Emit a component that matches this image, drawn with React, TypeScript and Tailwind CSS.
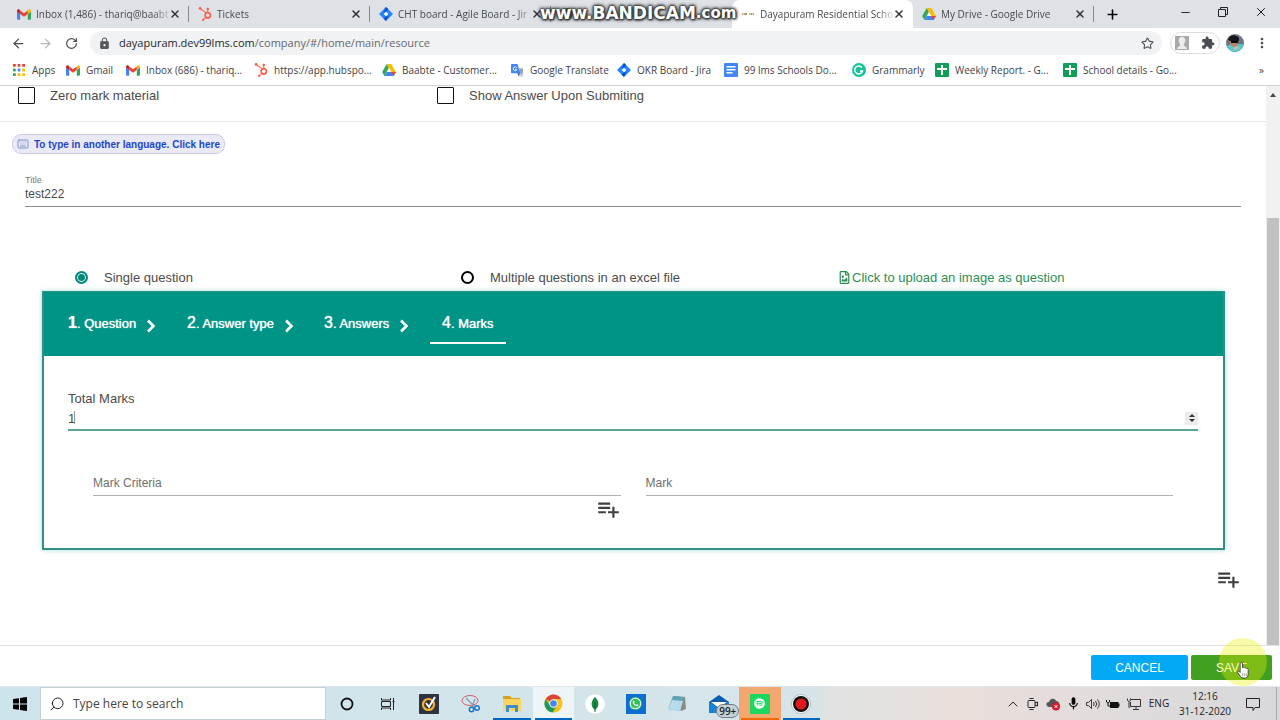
import React from "react";
import { useState } from "react";
import { ArrowLeft, ArrowRight, RotateCw, Star, X, Plus, Minus, Keyboard, Search, ChevronUp } from "lucide-react";
import { MdPlaylistAdd, MdLock, MdExtension, MdMoreVert, MdMic } from "react-icons/md";
import { FaRegFileImage, FaWhatsapp, FaSpotify, FaHubspot } from "react-icons/fa";

const Gmail = () => (
  <svg viewBox="0 0 24 18" className="w-[14px] h-[11px]">
    <path d="M0 3v13.4C0 17.3.7 18 1.6 18h3.9V7.5L0 3z" fill="#4285f4" />
    <path d="M18.500 18h3.900c.9 0 1.600-.7 1.600-1.600V3l-5.500 4.500V18z" fill="#34a853" />
    <path d="M18.500 2v6.200L24 4V2.500C24 .4 21.600-.8 20 .5L18.500 2z" fill="#fbbc04" />
    <path d="M5.500 8.200V2L12 6.900 18.500 2v6.200L12 13 5.500 8.200z" fill="#ea4335" />
    <path d="M0 2.500V4l5.500 4.200V2L4 .5C2.400-.8 0 .4 0 2.500z" fill="#c5221f" />
  </svg>
);

const Drive = () => (
  <svg viewBox="0 0 24 21" className="w-[14px] h-[12px]">
    <path d="M8 0 0 14l4 7 8-14L8 0z" fill="#34a853" />
    <path d="M8 0h8l8 14h-8L8 0z" fill="#fbbc04" />
    <path d="M8 14h16l-4 7H4l4-7z" fill="#4285f4" />
    <path d="m16 14 8 0-4 7-4-7z" fill="#ea4335" />
    <path d="m12 7 4 7H8l4-7z" fill="#fff" />
  </svg>
);

const Jira = () => (
  <svg viewBox="0 0 24 24" className="w-[14px] h-[14px]">
    <path d="M12 0 24 12 12 24 0 12z" fill="#2684ff" />
    <path d="m12 0-4 8 4 0 4-4zM12 24l4-8h-4l-4 4z" fill="#0052cc" />
    <path d="m12 8 4 4-4 4-4-4z" fill="#fff" />
  </svg>
);

const HubSpot = () => <FaHubspot className="w-[14px] h-[14px] text-[#ff5c45]" />;

const Sheets = () => (
  <svg viewBox="0 0 14 14" className="w-[14px] h-[14px]">
    <rect width="14" height="14" rx="1" fill="#0f9d58" />
    <path d="M6 2h2v3h4v2H8v5H6V7H2V5h4z" fill="#fff" />
  </svg>
);

const Docs = () => (
  <svg viewBox="0 0 14 14" className="w-[14px] h-[14px]">
    <rect width="14" height="14" rx="1" fill="#4285f4" />
    <path d="M2.500 3h9v1.500h-9zM2.500 6h9v1.500h-9zM2.500 9h6v1.500h-6z" fill="#fff" />
  </svg>
);

const Translate = () => (
  <svg viewBox="0 0 14 14" className="w-[13px] h-[13px]">
    <path d="M5 4h8v9.500H8z" fill="#c9cdd3" />
    <path d="M1 0h6l3 10H1a1 1 0 0 1-1-1V1a1 1 0 0 1 1-1z" fill="#4285f4" />
    <path d="M6.200 4.200A2 2 0 1 0 6.300 6H4.500" stroke="#fff" fill="none" />
    <path d="M9 6.500h4M11 5.500v1M12.300 6.500c-.5 2-1.500 3-2.500 3.700M10 7.500l2.500 3" stroke="#6b7a99" strokeWidth=".8" fill="none" />
    <path d="M7 10h3l-2 3z" fill="#3367d6" />
  </svg>
);

const Grammarly = () => (
  <svg viewBox="0 0 14 14" className="w-[14px] h-[14px]">
    <circle cx="7" cy="7" r="7" fill="#15c39a" />
    <path d="M10 4.700A4 4 0 1 0 10.500 8H8" stroke="#fff" strokeWidth="1.500" fill="none" />
  </svg>
);

const AppsGrid = () => (
  <svg viewBox="0 0 13 13" className="w-[12px] h-[12px]">
    <path d="M0 0h3v3H0zM5 0h3v3H5zM10 0h3v3h-3z" fill="#ea4335" />
    <path d="M0 5h3v3H0z" fill="#34a853" />
    <path d="M5 5h3v3H5z" fill="#4285f4" />
    <path d="M10 5h3v3h-3zM5 10h3v3H5zM10 10h3v3h-3z" fill="#fbbc04" />
    <path d="M0 10h3v3H0z" fill="#34a853" />
  </svg>
);

const SchoolMark = () => (
  <svg viewBox="0 0 14 14" className="w-[14px] h-[14px]">
    <path d="M1 7h5M8 7h5" stroke="#d9a066" strokeWidth="2" strokeDasharray="1.500 .5" />
    <path d="M4 7h2M10 7h1" stroke="#7fa08a" strokeWidth="2" />
  </svg>
);

const tabs = [
  { title: "Inbox (1,486) - thariq@baabt", icon: <Gmail /> },
  { title: "Tickets", icon: <HubSpot /> },
  { title: "CHT board - Agile Board - Jir", icon: <Jira /> },
  { title: "", icon: <span className="w-3 h-3 rounded-full bg-[#188038]" /> },
  { title: "Dayapuram Residential Scho", icon: <SchoolMark />, active: true },
  { title: "My Drive - Google Drive", icon: <Drive /> },
];

const bookmarks = [
  { title: "Apps", icon: <AppsGrid />, width: "w-[54px]" },
  { title: "Gmail", icon: <Gmail />, width: "w-[60px]" },
  { title: "Inbox (686) - thariq...", icon: <Gmail />, width: "w-32" },
  { title: "https://app.hubspo...", icon: <HubSpot />, width: "w-32" },
  { title: "Baabte - Customer...", icon: <Drive />, width: "w-32" },
  { title: "Google Translate", icon: <Translate />, width: "w-[107px]" },
  { title: "OKR Board - Jira", icon: <Jira />, width: "w-[107px]" },
  { title: "99 lms Schools Do...", icon: <Docs />, width: "w-32" },
  { title: "Grammarly", icon: <Grammarly />, width: "w-[83px]" },
  { title: "Weekly Report. - G...", icon: <Sheets />, width: "w-32" },
  { title: "School details - Go...", icon: <Sheets />, width: "w-32" },
];

function TabStrip() {
  return (
    <div className="relative flex items-stretch h-7 pl-2 bg-[#dee1e6]">
      {tabs.map((tab, i) => (
        <div
          key={i}
          className={
            tab.active
              ? "relative flex items-center w-[181px] px-2 rounded-t-lg bg-white"
              : "relative flex items-center w-[181px] px-2"
          }
        >
          <span className="flex justify-center w-4 shrink-0">{tab.icon}</span>
          <span className="flex-1 ml-1 whitespace-nowrap text-[#45494d] [mask-image:linear-gradient(to_right,black_88%,#0003)]">
            {tab.title}
          </span>
          <button aria-label="Close tab">
            <X size={12} strokeWidth={3} className="text-[#303236]" />
          </button>
          {!tab.active && i !== 3 && <span className="absolute right-0 top-[6px] w-px h-4 bg-[#85888d]" />}
        </div>
      ))}
      <button aria-label="New tab" className="ml-[11px]">
        <Plus size={15} strokeWidth={2.5} />
      </button>
      <div className="flex ml-auto">
        <button aria-label="Minimize" className="flex items-center justify-center w-[38px] pb-1"><Minus size={13} strokeWidth={1.5} /></button>
        <button aria-label="Restore" className="flex items-center justify-center w-[38px] pb-1">
          <svg viewBox="0 0 10 10" className="w-[10px] h-[10px]" fill="none" stroke="#222">
            <path d="M.5 2.500h7v7h-7zM2.500 2.500v-2h7v7h-2" />
          </svg>
        </button>
        <button aria-label="Close" className="flex items-center justify-center w-[38px] pb-1"><X size={14} strokeWidth={1.5} /></button>
      </div>
      {/* recorder watermark */}
      <div className="absolute left-[540px] top-0 h-[27px] flex items-center whitespace-nowrap font-bold text-white text-[17px] font-['DejaVu_Sans',sans-serif] [text-shadow:0_0_2px_#333,0_0_2px_#333,0_0_3px_#333,0_0_4px_#444,0_0_4px_#444,1px_1px_2px_#333]">
        www.BANDICAM<span className="text-[15px]">.com</span>
      </div>
    </div>
  );
}

function Toolbar() {
  return (
    <div className="flex items-center h-[30px] pl-[11px] pr-[10px] text-[#4a4d51]">
      <button aria-label="Back"><ArrowLeft size={15} /></button>
      <button aria-label="Forward" className="ml-3 text-[#b5b7ba]"><ArrowRight size={15} /></button>
      <button aria-label="Reload" className="ml-3"><RotateCw size={13} strokeWidth={2.2} /></button>
      <div className="flex items-center flex-1 h-6 ml-3 px-2 rounded-full bg-[#f0f2f4]">
        <MdLock size={13} className="text-[#55585c]" />
        <span className="ml-2 text-[11px] text-[#66696d]"><span className="text-[#25272a]">dayapuram.dev99lms.com</span>/company/#/home/main/resource</span>
        <button aria-label="Bookmark" className="ml-auto"><Star size={13} /></button>
      </div>
      <div className="flex items-center justify-between w-[50px] h-[22px] ml-2 px-1 border border-[#dcdee1] rounded-full">
        <svg viewBox="0 0 14 14" className="w-[14px] h-[14px]">
          <rect width="14" height="14" fill="#a9a9ab" />
          <path d="M2 13c0-3 3-2 3-4S3 6 4 3s5-3 6 0-1 4-1 6 3 1 3 4z" fill="#ececee" />
        </svg>
        <MdExtension size={14} />
      </div>
      <svg viewBox="0 0 18 18" className="w-[18px] h-[18px] ml-[6px] rounded-full">
        <rect width="18" height="18" fill="#6b7785" />
        <path d="M0 13c4-4 9-2 18-3v8H0z" fill="#5cc7cd" />
        <ellipse cx="8" cy="8" rx="4" ry="5" fill="#b98368" />
        <path d="M2 6c1-6 8-6 11-2v3H4z" fill="#16181d" />
        <path d="M5 7h7v2H5z" fill="#08090b" />
        <path d="m7 14 4-2 2 2-4 2z" fill="#d6b5a2" />
      </svg>
      <button aria-label="Menu" className="ml-[10px]"><MdMoreVert size={16} /></button>
    </div>
  );
}

function Bookmarks() {
  return (
    <div className="flex items-center h-7 pl-3 pr-4 pb-[3px] border-b border-[#cfd1d4] text-[#3f4246]">
      {bookmarks.map((b) => (
        <a key={b.title} href="#" className={`flex items-center shrink-0 whitespace-nowrap ${b.width}`}>
          <span className="flex justify-center w-[14px] shrink-0">{b.icon}</span>
          <span className="ml-[6px]">{b.title}</span>
        </a>
      ))}
      <button aria-label="More bookmarks" className="ml-auto">»</button>
    </div>
  );
}

function QuestionCard() {
  const [marks, setMarks] = useState("1");
  const steps = ["Question", "Answer type", "Answers", "Marks"];
  const widths = ["w-[119px]", "w-[137px]", "w-[106px]", ""];

  return (
    <section className="ml-[42px] mr-[41px] border-2 border-t border-[#2f9085] shadow-[0_0_5px_rgba(0,148,134,0.35)]">
      <nav className="flex items-start h-16 px-6 bg-[#009486] text-white">
        {steps.map((step, i) => (
          <div key={step} className={`flex items-center h-[52px] pt-3 ${widths[i]}`}>
            <a
              href="#"
              className={
                i === 3
                  ? "flex items-baseline h-10 pt-[7px] px-3 border-b-2 border-white [text-shadow:0_0_1px_#fff]"
                  : "flex items-baseline h-10 pt-[7px] [text-shadow:0_0_1px_#fff]"
              }
            >
              <span className={i === 0 ? "text-base font-bold" : "text-base"}>{i + 1}</span>
              <span className="text-[13px] whitespace-pre">. {step}</span>
            </a>
            {i < 3 && (
              <svg viewBox="0 0 10 14" className="w-[10px] h-[14px] ml-[10px] mt-1 shrink-0" fill="none" stroke="white" strokeWidth="2.600">
                <path d="m2 1.500 5.500 5.500L2 12.500" />
              </svg>
            )}
          </div>
        ))}
      </nav>
      <div className="pt-[35px] pl-6 pr-[25px] pb-[26px]">
        <label htmlFor="total" className="block leading-4">Total Marks</label>
        <div className="relative flex items-center h-6 border-b-2 border-[#5aa399]">
          <input
            id="total"
            type="number"
            value={marks}
            onChange={(e) => setMarks(e.target.value)}
            className="flex-1 h-5 text-[13px] outline-none [appearance:textfield]"
          />
          <span className="absolute left-[6px] top-1 w-px h-[13px] bg-[#999]" />
          <span className="flex flex-col items-center justify-center gap-[2px] w-[13px] h-[13px] bg-[#ececec]">
            <button aria-label="Increase" className="border-x-[3px] border-b-[3px] border-x-transparent border-b-[#333]" />
            <button aria-label="Decrease" className="border-x-[3px] border-t-[3px] border-x-transparent border-t-[#333]" />
          </span>
        </div>
        <div className="grid grid-cols-2 gap-[25px] px-[25px] mt-[39px]">
          <div>
            <input
              aria-label="Mark Criteria"
              placeholder="Mark Criteria"
              className="block w-full h-[26px] text-[12px] border-b border-[#b0b0b0] outline-none placeholder:text-[#6f6f6f]"
            />
            <button aria-label="Add criteria" className="block ml-auto">
              <MdPlaylistAdd size={26} className="text-[#3f3f3f]" />
            </button>
          </div>
          <div>
            <input
              aria-label="Mark"
              placeholder="Mark"
              className="block w-full h-[26px] text-[12px] border-b border-[#b0b0b0] outline-none placeholder:text-[#6f6f6f]"
            />
          </div>
        </div>
      </div>
    </section>
  );
}

function Content() {
  const [mode, setMode] = useState("single");
  const box = "appearance-none w-[17px] h-[17px] border border-[#111] rounded-[1px] bg-white checked:bg-[#009486]";
  const radio =
    "appearance-none w-[13px] h-[13px] rounded-full border-2 border-black checked:border-[#00897b] checked:bg-[#00897b] checked:shadow-[inset_0_0_0_1px_white]";

  return (
    <main className="flex-1 text-[13px] text-[#4b4b4b]">
      <div className="grid grid-cols-[419fr_829fr] pl-[18px] pt-px h-9 border-b border-[#e6e6e6]">
        <label className="flex items-start"><input type="checkbox" className={box} /><span className="ml-[15px] leading-[18px]">Zero mark material</span></label>
        <label className="flex items-start"><input type="checkbox" className={box} /><span className="ml-[15px] leading-[18px]">Show Answer Upon Submiting</span></label>
      </div>
      <button className="flex items-center h-5 mt-3 ml-3 px-1 rounded-[9px] border border-[#cdd0e4] bg-[#e9eaf6] text-[10px] font-bold text-[#1d46c8]">
        <Keyboard size={12} className="text-[#7f90cf]" />
        <span className="ml-[5px] whitespace-nowrap">To type in another language. Click here</span>
      </button>
      <div className="mt-5 mx-[25px] border-b border-[#8a8a8a]">
        <label htmlFor="title" className="block text-[9px] leading-3 text-[#7a7a7a]">Title</label>
        <input id="title" defaultValue="test222" className="block w-full h-5 pb-1 text-[12px] outline-none" />
      </div>
      <div className="grid grid-cols-[386fr_377fr_386fr] items-center h-7 pt-px mt-14 ml-[75px] mr-[42px]">
        <label className="flex items-center"><input type="radio" name="mode" className={radio} checked={mode === "single"} onChange={() => setMode("single")} /><span className="ml-4">Single question</span></label>
        <label className="flex items-center"><input type="radio" name="mode" className={radio} checked={mode === "multi"} onChange={() => setMode("multi")} /><span className="ml-4">Multiple questions in an excel file</span></label>
        <a href="#" className="flex items-center text-[#2a8f55]"><FaRegFileImage size={13} /><span className="ml-px">Click to upload an image as question</span></a>
      </div>
      <QuestionCard />
      <button aria-label="Add question" className="block mt-4 ml-auto mr-[25px]">
        <MdPlaylistAdd size={26} className="text-[#3f3f3f]" />
      </button>
    </main>
  );
}

function Footer() {
  return (
    <footer className="relative flex justify-end gap-[3px] h-[41px] pt-[9px] pr-2 bg-white border-t border-[#e2e2e2] text-[12px] text-white">
      <button className="w-[97px] h-[25px] rounded-[2px] bg-[#03a9f4]">CANCEL</button>
      <button className="w-[81px] h-[25px] rounded-[2px] bg-[#41a021]">SAVE</button>
      {/* pointer highlight */}
      <div className="absolute right-[13px] -top-2 w-12 h-12 rounded-full bg-[#eaf000]/35" />
      <svg viewBox="0 0 14 18" className="absolute right-[30px] top-4 w-[14px] h-[17px]">
        <path d="M4 9V2c0-2 2.500-2 2.500 0v4c.5-.8 1.800-.6 2 .3.600-.7 1.800-.3 2 .5.700-.5 2 0 2 1.200v4c0 3-1 5-3 5H7c-2 0-3-2-5.500-5.500C.5 10 2 8.500 4 11z" fill="#fff" stroke="#333" strokeWidth=".9" />
        <path d="M6.500 12v3M8.500 12v3M10.500 12v3" stroke="#777" strokeWidth=".7" />
      </svg>
    </footer>
  );
}

const taskIcons = [
  { name: "Cortana", icon: <svg viewBox="0 0 14 14" className="w-[14px]"><circle cx="7" cy="7" r="5.500" fill="none" stroke="#111" strokeWidth="1.800" /></svg> },
  { name: "Task view", icon: <svg viewBox="0 0 14 14" className="w-[14px]" fill="none" stroke="#222"><path d="M.5 1v2h9V1M.5 4.500h9v5h-9zM.5 13v-2h9v2M12.500 1v12M11.500 4.500h2" /></svg> },
  { name: "Norton", icon: <svg viewBox="0 0 20 20" className="w-5"><rect width="20" height="20" rx="1" fill="#2d3440" /><circle cx="9.500" cy="10.500" r="5.500" fill="none" stroke="#f5b427" strokeWidth="2.200" /><path d="m7 9 3 4 6-10" fill="none" stroke="#fff" strokeWidth="2" /></svg> },
  { name: "Snip", icon: <svg viewBox="0 0 20 20" className="w-5" fill="none"><ellipse cx="9" cy="6.500" rx="8" ry="5" stroke="#d5596b" /><path d="m5 4 9 9M14 5l-3 8" stroke="#8d99a8" strokeWidth="1.300" /><circle cx="10.500" cy="15.500" r="2.200" stroke="#1976c9" strokeWidth="1.500" /><circle cx="16" cy="14" r="2.200" stroke="#1976c9" strokeWidth="1.500" /></svg> },
  { name: "Explorer", icon: <svg viewBox="0 0 20 18" className="w-5"><path d="M1 1h7l2 2h8v3H1z" fill="#d9a01c" /><path d="M1 4h18v12H1z" fill="#fbd35f" /><path d="M4 10h12v7h-3v-4H7v4H4z" fill="#3b8fd0" /></svg>, line: "bg-[#0067c0]" },
  { name: "Chrome", icon: <svg viewBox="0 0 20 20" className="w-[19px]"><circle cx="10" cy="10" r="9.500" fill="#fbc116" /><path d="M10 10 1.800 5.200A9.500 9.500 0 0 1 18.200 5.300H10z" fill="#db4437" /><path d="M1.800 5.200A9.500 9.500 0 0 0 9 19.500L13 13l-3-3-4.500 1z" fill="#1b9a59" /><circle cx="10" cy="10" r="4.500" fill="#fff" /><circle cx="10" cy="10" r="3.500" fill="#4285f4" /></svg>, line: "bg-[#0067c0]", bg: "bg-white/60" },
  { name: "MongoDB", icon: <svg viewBox="0 0 20 20" className="w-5"><circle cx="10" cy="10" r="9.800" fill="#fff" /><path d="M10 3c5 5 4 10 0 13-4-3-5-8 0-13z" fill="#138a3c" /><path d="M10 8v10" stroke="#0b6b2c" /></svg> },
  { name: "WhatsApp", icon: <span className="flex items-center justify-center w-5 h-5 bg-[#0a6fd0]"><FaWhatsapp size={13} className="text-white rounded-full bg-[#31c05a]" /></span> },
  { name: "Notepad", icon: <svg viewBox="0 0 20 20" className="w-5"><path d="m6 2 12 1 1 12-5 2z" fill="#8b8b86" /><path d="m6 2 11 1-4 14-12-2z" fill="#5fa3ba" /><path d="m5 6 11 1-3 10-12-2z" fill="#b5dce8" /></svg> },
  { name: "Mail", icon: <svg viewBox="0 0 20 18" className="w-5"><path d="M0 7 10 0l10 7v11H0z" fill="#0b5cad" /><path d="M2 7h16l-8 6z" fill="#fff" /><path d="m0 7 10 6 10-6v11H0z" fill="#1683d8" /></svg>, badge: "99+" },
  { name: "Spotify", icon: <span className="flex items-center justify-center w-5 h-5 bg-[#1ed760]"><FaSpotify size={11} className="text-white" /></span>, line: "bg-[#f26a00]", bg: "bg-[#f4a870]" },
  { name: "Recorder", icon: <svg viewBox="0 0 20 20" className="w-5"><circle cx="10" cy="10" r="9.500" fill="#fff" stroke="#999" strokeWidth=".6" /><circle cx="10" cy="10" r="8" fill="#111" /><circle cx="10" cy="10" r="5.500" fill="#e3191c" /></svg>, line: "bg-[#0067c0]" },
];

function Taskbar() {
  return (
    <div className="flex items-stretch h-[34px] shrink-0 border-t border-[#dfe5e8] bg-linear-to-r from-[#cce5ed] via-[#d6e5e9] via-60% to-[#d8d8dc] text-[#222]">
      <button aria-label="Start" className="flex items-center justify-center w-10">
        <svg viewBox="0 0 14 14" className="w-[14px] h-[14px]"><path d="M0 2l6-.8v5.400H0zM7 1l7-1v6.600H7zM0 7.400h6v5.400L0 12zM7 7.400h7V14l-7-1z" /></svg>
      </button>
      <label className="flex items-center w-[286px] pl-2 border border-[#c5d0d4] bg-white">
        <Search size={16} strokeWidth={1.5} className="-scale-x-100" />
        <input aria-label="Search" placeholder="Type here to search" className="ml-2 w-48 text-[12px] outline-none placeholder:text-[#444]" />
      </label>
      <div className="grid grid-cols-12 w-[496px]">
        {taskIcons.map((t) => (
          <button key={t.name} aria-label={t.name} className={`relative flex items-center justify-center ${t.bg || ""}`}>
            {t.icon}
            {t.badge && <span className="absolute right-0 bottom-[2px] h-[14px] px-[2px] rounded-full border border-[#777] bg-[#c3d2da] text-[10px] leading-3 font-semibold">{t.badge}</span>}
            {t.line && <span className={`absolute inset-x-[2px] bottom-0 h-[2px] ${t.line}`} />}
          </button>
        ))}
      </div>
      <div className="flex items-center flex-1 justify-end bg-linear-to-r from-[#dfe2e2] via-[#e9dfdb] via-30% to-[#d8d8dc]">
        <button aria-label="Show hidden icons" className="flex justify-center w-5"><ChevronUp size={16} strokeWidth={1.5} /></button>
        <span className="flex justify-center w-5">
          <svg viewBox="0 0 12 12" className="w-3" fill="none" stroke="#222"><rect x="1" y="2.500" width="7" height="7" rx="1" /><path d="m8 5 2.500-1v4L8 7M2.500.5h4M2.500 11.500h4" /></svg>
        </span>
        <span className="flex justify-center w-5">
          <svg viewBox="0 0 14 14" className="w-[14px]"><path d="M3 10C-1 9 0 5 3 5c1-4 6-4 7-1 3 0 4 3 3 6z" fill="#555" /><circle cx="10" cy="9.500" r="4" fill="#d8182c" /><path d="m8.500 8 3 3m0-3-3 3" stroke="#fff" /></svg>
        </span>
        <span className="flex justify-center w-5"><MdMic size={15} className="text-black" /></span>
        <span className="flex justify-center w-5">
          <svg viewBox="0 0 14 12" className="w-[14px]" fill="none" stroke="#222"><path d="M.5 4.500h2l3-3v9l-3-3h-2zM7.500 4q1.500 2 0 4M9.500 3q2.500 3 0 6M11.500 1.500q3.500 4.500 0 9" strokeWidth=".9" /></svg>
        </span>
        <span className="flex justify-center w-5">
          <svg viewBox="0 0 14 10" className="w-[14px]"><path d="M4 3h8.500v1.500h1v3h-1V9H4z" fill="#111" /><path d="M.5 1v2q1.500 2 3 0V1M2 4v3h2" fill="none" stroke="#111" /></svg>
        </span>
        <span className="flex justify-center w-[22px]">
          <svg viewBox="0 0 14 12" className="w-[14px]" fill="none" stroke="#333"><path d="M4 1.500h9.500v7H3.500V4M6 11.500h6M9 9v2M.5.5v2q1.500 2 3 0v-2M2 4v6" /></svg>
        </span>
        <span className="w-7 text-center">ENG</span>
        <span className="w-16 text-center leading-[15px]">12:16<br />31-12-2020</span>
        <button aria-label="Notifications" className="flex justify-center w-8">
          <svg viewBox="0 0 14 14" className="w-[14px]" fill="none" stroke="#222"><path d="M.5 1.500h13v9H9l-2 3v-3H.5z" /></svg>
        </button>
        <span className="w-2 h-full border-r border-[#aaa] mr-[3px]" />
      </div>
    </div>
  );
}

export default function App() {
  return (
    <div className="flex flex-col min-h-screen overflow-hidden bg-white text-[10px] font-['Open_Sans','Noto_Sans',sans-serif]">
      <header className="shrink-0">
        <TabStrip />
        <Toolbar />
        <Bookmarks />
      </header>
      <div className="flex flex-col flex-1 font-['Liberation_Sans',Arial,sans-serif]">
        <div className="flex flex-1">
          <Content />
          <div className="flex flex-col items-center w-[14px] pt-[7px] bg-[#f1f1f1]">
            <span className="border-x-[3px] border-b-4 border-x-transparent border-b-[#444]" />
            <span className="flex-1 w-3 mt-[121px] bg-[#c1c1c1]" />
          </div>
        </div>
        <Footer />
      </div>
      <Taskbar />
    </div>
  );
}
